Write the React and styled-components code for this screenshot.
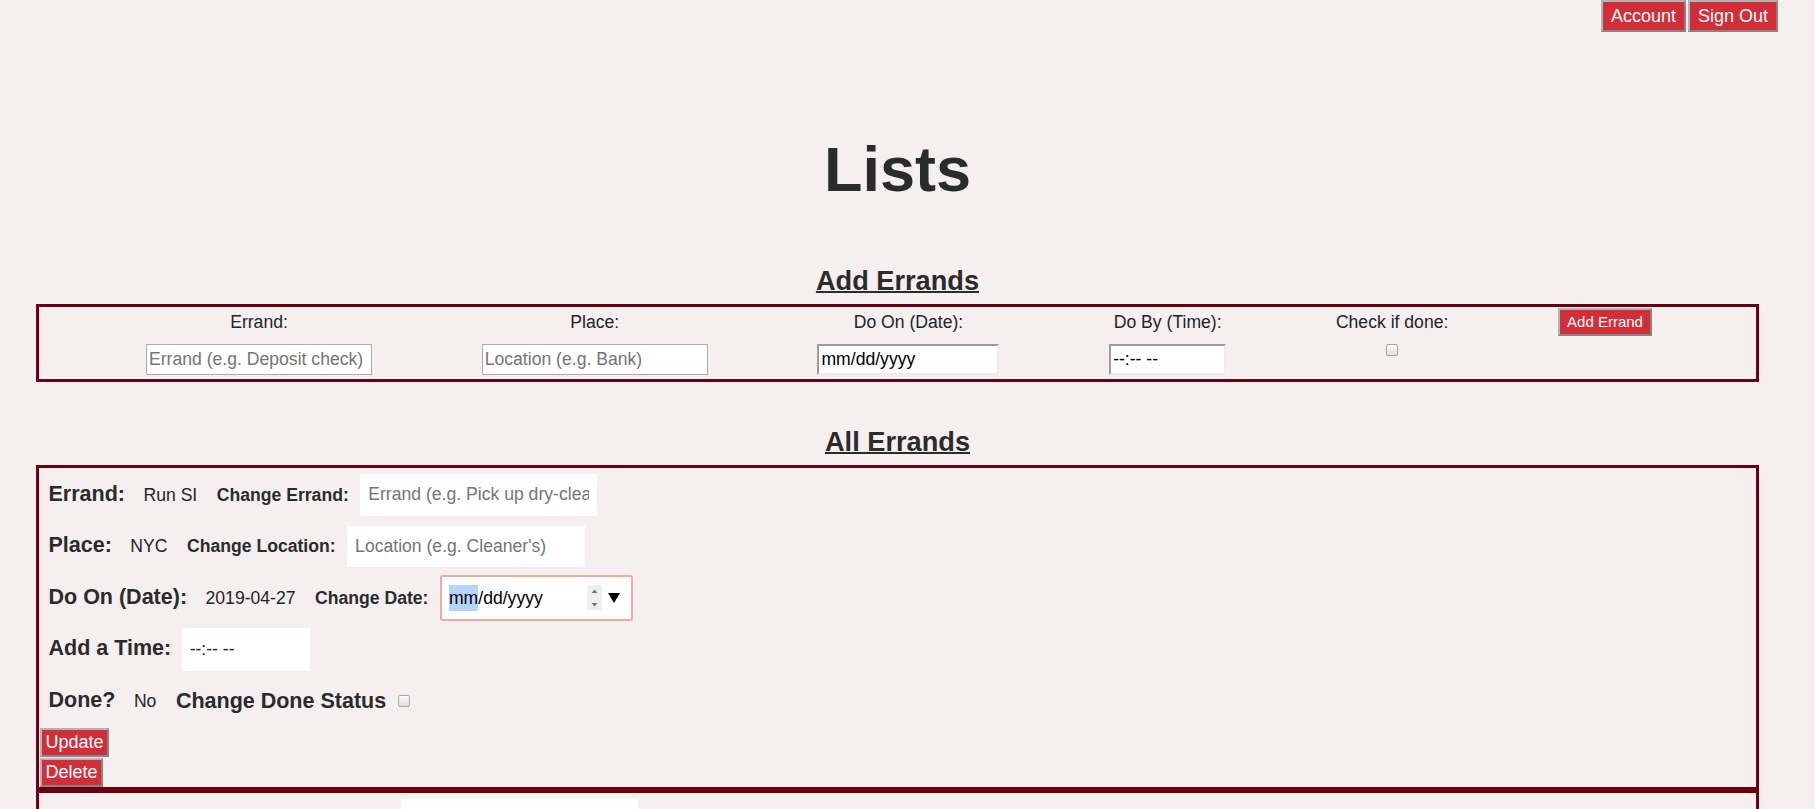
import React from "react";
import styled, { createGlobalStyle } from "styled-components";

const GlobalStyle = createGlobalStyle`
  * { box-sizing: border-box; }
  body {
    margin: 0;
    background: #f5efef;
    font-family: "Liberation Sans", Arial, sans-serif;
    font-size: 17.6px;
    line-height: 1.5;
    color: #212529;
  }
`;

const errands = [
  { name: "Run SI", place: "NYC", date: "2019-04-27", done: "No", focused: true },
  { name: "Pick up mail", place: "Post office", date: "2019-04-28", done: "No" },
];

const App = () => {
  return (
    <Page>
      <GlobalStyle />
      <TopBar>
        <RedButton $size="18px" $pad="0 8px" $h="32px">Account</RedButton>
        <RedButton $size="18px" $pad="0 8px" $h="32px">Sign Out</RedButton>
      </TopBar>

      <Title>Lists</Title>

      <SectionTitle $top="56.4px">Add Errands</SectionTitle>
      <AddBox>
        <Field>
          <FieldLabel>Errand:</FieldLabel>
          <AddInput $w="226px" placeholder="Errand (e.g. Deposit check)" />
        </Field>
        <Field>
          <FieldLabel>Place:</FieldLabel>
          <AddInput $w="226px" placeholder="Location (e.g. Bank)" />
        </Field>
        <Field>
          <FieldLabel>Do On (Date):</FieldLabel>
          <AddInput $w="182px" $inset defaultValue="mm/dd/yyyy" />
        </Field>
        <Field>
          <FieldLabel>Do By (Time):</FieldLabel>
          <AddInput $w="117px" $inset defaultValue="--:-- --" />
        </Field>
        <Field>
          <FieldLabel>Check if done:</FieldLabel>
          <Check type="checkbox" />
        </Field>
        <RedButton $size="15px" $pad="0 7px" $h="28px" style={{ marginTop: -1 }}>
          Add Errand
        </RedButton>
      </AddBox>

      <SectionTitle $top="43px">All Errands</SectionTitle>
      {errands.map((e) => (
        <ErrandCard key={e.name}>
          <Row>
            <BigLabel>Errand:</BigLabel>
            <Value>{e.name}</Value>
            <ChangeGroup>
              <ChangeLabel>Change Errand:</ChangeLabel>
              <EditInput $w="237px" placeholder="Errand (e.g. Pick up dry-cleaning)" />
            </ChangeGroup>
          </Row>
          <Row>
            <BigLabel>Place:</BigLabel>
            <Value>{e.place}</Value>
            <ChangeGroup>
              <ChangeLabel>Change Location:</ChangeLabel>
              <EditInput $w="238px" $h="41px" placeholder="Location (e.g. Cleaner's)" />
            </ChangeGroup>
          </Row>
          <Row>
            <BigLabel>Do On (Date):</BigLabel>
            <Value>{e.date}</Value>
            <ChangeGroup>
              <ChangeLabel>Change Date:</ChangeLabel>
              <DateEdit $focused={e.focused}>
                <Selected $on={e.focused}>mm</Selected>/dd/yyyy
                <Spinner $on={e.focused}>
                  <svg width="7" height="20" viewBox="0 0 7 20">
                    <path d="M0.5 5 L3.5 1.5 L6.5 5 Z" fill="#777" />
                    <path d="M0.5 15 L3.5 18.5 L6.5 15 Z" fill="#777" />
                  </svg>
                </Spinner>
                <svg width="12" height="10" viewBox="0 0 12 10" style={{ marginLeft: 6 }}>
                  <path d="M0 0 H12 L6 10 Z" fill="#000" />
                </svg>
              </DateEdit>
            </ChangeGroup>
          </Row>
          <Row>
            <BigLabel>Add a Time:</BigLabel>
            <TimeEdit>--:-- --</TimeEdit>
          </Row>
          <Row>
            <BigLabel>Done?</BigLabel>
            <Value>{e.done}</Value>
            <ChangeGroup>
              <ChangeLabel $big>Change Done Status</ChangeLabel>
              <Check type="checkbox" />
            </ChangeGroup>
          </Row>
          <ButtonStack>
            <RedButton $size="18px" $pad="0 3.5px" $h="29px">Update</RedButton>
            <RedButton $size="18px" $pad="0 3.5px" $h="29px">Delete</RedButton>
          </ButtonStack>
        </ErrandCard>
      ))}
    </Page>
  );
};

export default App;

const Page = styled.div`
  width: calc(100% - 20px);
  padding-bottom: 40px;
`;
const TopBar = styled.div`
  display: flex;
  justify-content: flex-end;
  gap: 2px;
  padding-right: 17px;
`;
const RedButton = styled.button`
  height: ${(p) => p.$h};
  padding: ${(p) => p.$pad};
  font-family: inherit;
  font-size: ${(p) => p.$size};
  line-height: 1;
  color: #fff;
  background: #d12e3a;
  border: 2px solid;
  border-color: #b4b4b4 #858585 #858585 #b4b4b4;
  cursor: pointer;
`;
const Title = styled.h1`
  margin: 100px 0 0;
  font-size: 63px;
  line-height: 75.6px;
  font-weight: 700;
  text-align: center;
  color: #292b2c;
`;
const SectionTitle = styled.h2`
  margin: ${(p) => p.$top} 0 6.4px;
  font-size: 27.2px;
  line-height: 33.6px;
  font-weight: 700;
  text-align: center;
  color: #292b2c;
  text-decoration: underline;
  text-decoration-thickness: 2px;
`;
const AddBox = styled.div`
  display: flex;
  justify-content: space-between;
  align-items: flex-start;
  height: 78px;
  margin: 0 36px;
  padding: 2px 104px 0 107px;
  border: 3px solid #6b0010;
`;
const Field = styled.div`
  display: flex;
  flex-direction: column;
  align-items: center;
`;
const FieldLabel = styled.label`
  line-height: 26.4px;
  margin-bottom: 8.6px;
`;
const AddInput = styled.input`
  width: ${(p) => p.$w};
  height: 31px;
  padding: 1px 2px;
  font-family: inherit;
  font-size: 17.6px;
  color: #000;
  background: #fff;
  border: ${(p) => (p.$inset ? "2px" : "1px")} solid;
  border-color: ${(p) => (p.$inset ? "#9c9c9c #ececec #ececec #9c9c9c" : "#aaa")};
  &::placeholder { color: #757575; }
`;
const Check = styled.input`
  appearance: none;
  width: 12px;
  height: 12px;
  margin: 0;
  border: 1px solid #a5a5a5;
  border-radius: 2px;
  background: linear-gradient(#fdfdfd, #dedede);
`;
const ErrandCard = styled.div`
  margin: 0 36px;
  border: 3px solid #6b0010;
  padding-top: 1px;
`;
const Row = styled.div`
  display: flex;
  align-items: center;
  gap: 18.5px;
  height: 51.5px;
  padding-left: 9.5px;
`;
const BigLabel = styled.h4`
  margin: 0;
  font-size: 21.5px;
  line-height: 1.2;
  font-weight: 700;
  color: #292b2c;
`;
const Value = styled.span`
  font-size: 17.6px;
`;
const ChangeGroup = styled.div`
  display: flex;
  align-items: center;
  gap: 11.5px;
  margin-left: 1px;
`;
const ChangeLabel = styled.label`
  font-size: ${(p) => (p.$big ? "21.5px" : "17.6px")};
  font-weight: 700;
  color: #292b2c;
`;
const EditInput = styled.input`
  width: ${(p) => p.$w};
  height: ${(p) => p.$h || "42px"};
  padding: 0 8px;
  border: none;
  background: #fff;
  font-family: inherit;
  font-size: 17.6px;
  color: #212529;
  &::placeholder { color: #757575; }
`;
const DateEdit = styled.div`
  display: flex;
  align-items: center;
  width: 193px;
  height: 46px;
  padding: 0 11px 0 7px;
  background: #fff;
  border: 2px solid ${(p) => (p.$focused ? "#f3aa99" : "#fff")};
  border-radius: 3px;
  color: #000;
  font-size: 17.6px;
`;
const Selected = styled.span`
  background: ${(p) => (p.$on ? "#b4d5fe" : "transparent")};
`;
const Spinner = styled.span`
  display: flex;
  align-items: center;
  justify-content: center;
  width: 15px;
  height: 25px;
  margin-left: auto;
  background: ${(p) => (p.$on ? "#efefef" : "transparent")};
`;
const TimeEdit = styled.div`
  display: flex;
  align-items: center;
  width: 128px;
  height: 43px;
  margin-left: -8px;
  padding-left: 8px;
  background: #fff;
  color: #222;
  font-size: 17.6px;
`;
const ButtonStack = styled.div`
  display: flex;
  flex-direction: column;
  align-items: flex-start;
  gap: 1px;
  padding: 1.5px 0 0 1px;
`;
